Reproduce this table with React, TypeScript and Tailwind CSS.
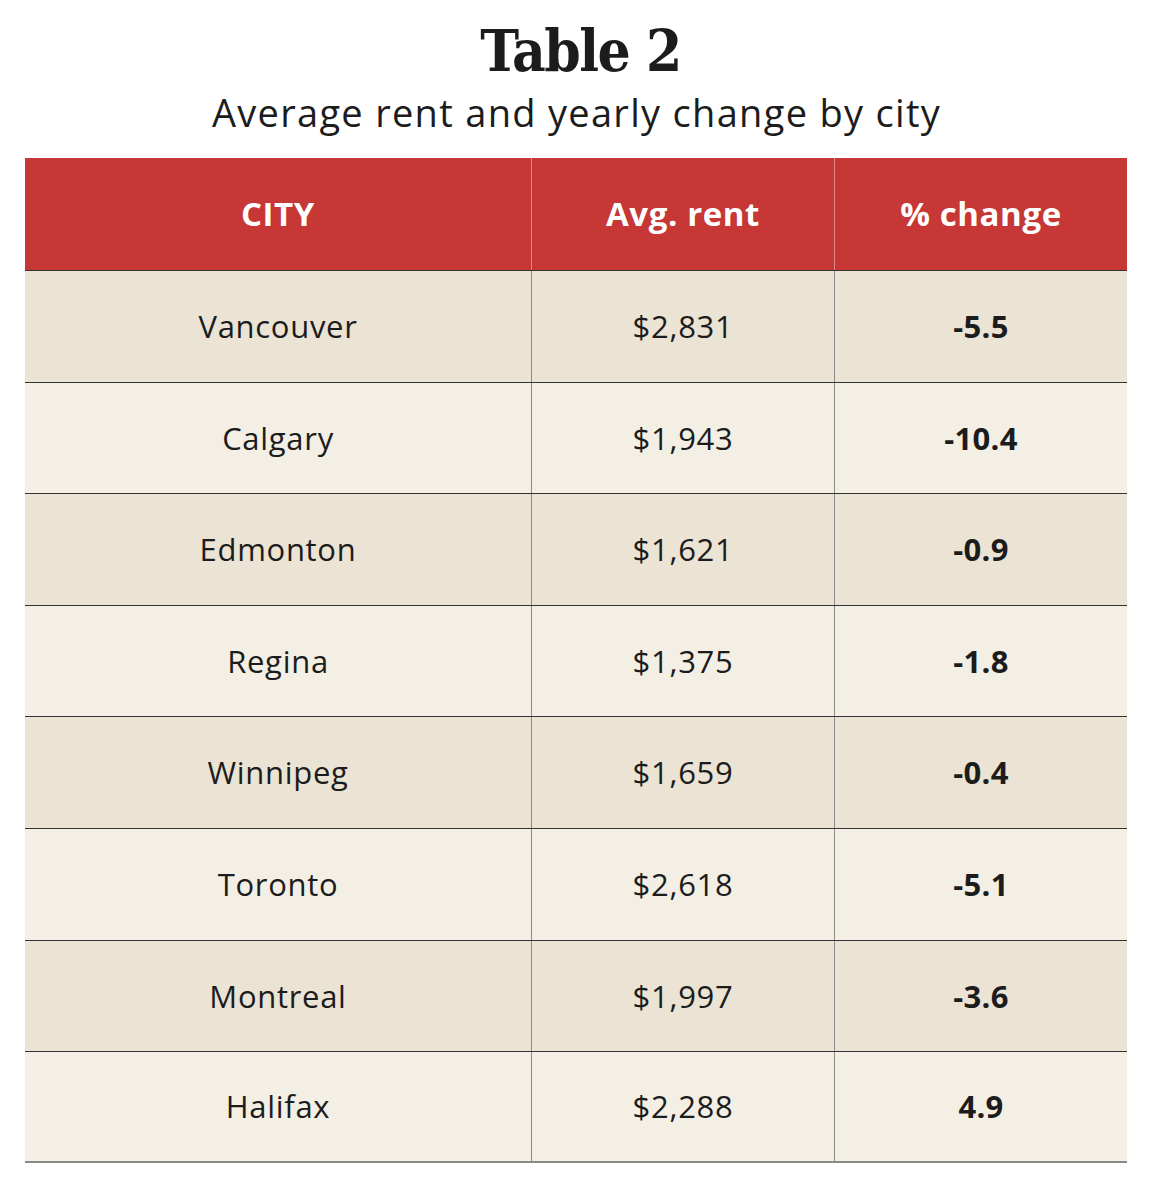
const rows = [
  { city: 'Vancouver', rent: '$2,831', change: '-5.5' },
  { city: 'Calgary', rent: '$1,943', change: '-10.4' },
  { city: 'Edmonton', rent: '$1,621', change: '-0.9' },
  { city: 'Regina', rent: '$1,375', change: '-1.8' },
  { city: 'Winnipeg', rent: '$1,659', change: '-0.4' },
  { city: 'Toronto', rent: '$2,618', change: '-5.1' },
  { city: 'Montreal', rent: '$1,997', change: '-3.6' },
  { city: 'Halifax', rent: '$2,288', change: '4.9' },
];

export default function App() {
  return (
    <div className="w-[1166px] h-[1184px] bg-white text-[#1c1c1c] font-['Open_Sans',sans-serif]">
      <div className="pt-[18px] text-center">
        <h1 className="pr-[5px] font-['DejaVu_Serif_Condensed','DejaVu_Serif',serif] font-black text-[58px] leading-[66px] tracking-[-1.5px]">
          Table 2
        </h1>
        <p className="pr-[13px] text-[38px] leading-[50px] mt-[3px] tracking-[1.3px]">
          Average rent and yearly change by city
        </p>
      </div>
      <div className="mt-[21px] ml-[25px] w-[1102px]">
        <div className="grid grid-cols-[507px_303px_292px] h-[112px] bg-[#c63735] text-white font-bold text-[33px] tracking-[0.6px]">
          <div className="flex items-center justify-center border-r border-[#e08a88]">CITY</div>
          <div className="flex items-center justify-center border-r border-[#e08a88]">Avg. rent</div>
          <div className="flex items-center justify-center">% change</div>
        </div>
        {rows.map((r, i) => (
          <div
            key={r.city}
            className={
              'grid grid-cols-[507px_303px_292px] h-[111.6px] text-[31px] tracking-[0.7px] border-t border-[#333] ' +
              (i % 2 === 0 ? 'bg-[#ebe3d3]' : 'bg-[#f3efe5]') +
              (i === rows.length - 1 ? ' border-b-2 border-b-[#8a8a86]' : '')
            }
          >
            <div className="flex items-center justify-center border-r border-[#8a8a86]">{r.city}</div>
            <div className="flex items-center justify-center border-r border-[#8a8a86]">{r.rent}</div>
            <div className="flex items-center justify-center font-bold tracking-[0.3px]">{r.change}</div>
          </div>
        ))}
      </div>
    </div>
  );
}
